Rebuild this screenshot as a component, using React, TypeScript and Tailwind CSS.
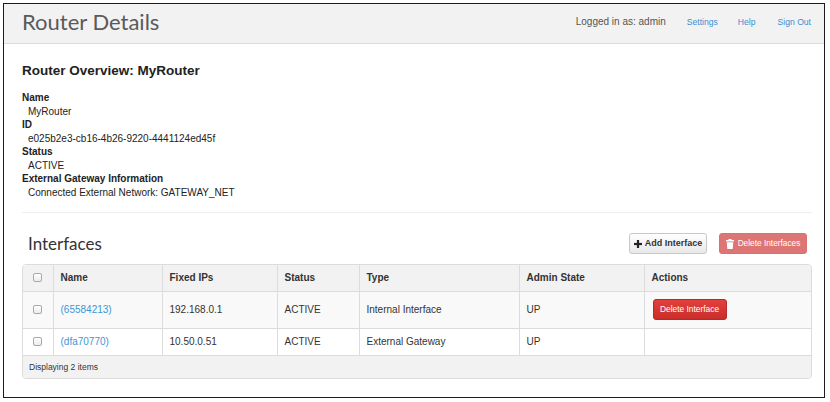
import React from "react";

const rows = [
  {
    id: "(65584213)",
    ip: "192.168.0.1",
    status: "ACTIVE",
    type: "Internal Interface",
    admin: "UP",
    deletable: true,
  },
  {
    id: "(dfa70770)",
    ip: "10.50.0.51",
    status: "ACTIVE",
    type: "External Gateway",
    admin: "UP",
    deletable: false,
  },
];

const details = [
  { label: "Name", value: "MyRouter" },
  { label: "ID", value: "e025b2e3-cb16-4b26-9220-4441124ed45f" },
  { label: "Status", value: "ACTIVE" },
  { label: "External Gateway Information", value: "Connected External Network: GATEWAY_NET" },
];

function Checkbox() {
  return (
    <span className="block mx-auto w-[9px] h-[9px] rounded-[2px] border border-[#a9a9a9] bg-gradient-to-b from-white to-[#ececec]" />
  );
}

function TrashIcon() {
  return (
    <svg width="8" height="10" viewBox="0 0 8 10" aria-hidden="true" className="flex-shrink-0">
      <rect x="0" y="1" width="8" height="1.5" fill="white" />
      <rect x="2.5" y="0" width="3" height="1.2" fill="white" />
      <path d="M0.8 3.2H7.2L6.7 10H1.3Z" fill="white" />
    </svg>
  );
}

function PlusIcon() {
  return (
    <svg width="8" height="8" viewBox="0 0 8 8" aria-hidden="true" className="flex-shrink-0">
      <rect x="2.9" y="0" width="2.2" height="8" fill="#222" />
      <rect x="0" y="2.9" width="8" height="2.2" fill="#222" />
    </svg>
  );
}

export default function App() {
  return (
    <div className="min-h-screen bg-white p-[3px] font-['Liberation_Sans',Arial,sans-serif] text-[#333]">
      <div className="w-[822px] h-[395px] border border-[#1c1c1c] overflow-hidden flex flex-col">
        {/* Top bar */}
        <header className="h-[40px] flex-shrink-0 bg-[#f2f2f2] border-b border-[#dcdcdc] flex justify-between pl-[18px] pr-[13px]">
          <h1 className="font-['Lato',sans-serif] text-[22px] leading-none text-[#5a5a5a] pt-[7px]">
            Router Details
          </h1>
          <div className="flex items-baseline pt-[10px]">
            <span className="text-[10px] text-[#555]">Logged in as: admin</span>
            <a className="ml-[21px] text-[8.6px] text-[#3b8fd0]">Settings</a>
            <a className="ml-[20px] text-[8.6px] text-[#3b8fd0]">Help</a>
            <a className="ml-[22px] text-[8.6px] text-[#3b8fd0]">Sign Out</a>
          </div>
        </header>

        <div className="pl-[18px] pr-[12px]">
          {/* Overview */}
          <h2 className="mt-[19px] text-[13.5px] leading-[16px] font-bold text-[#222]">
            Router Overview: MyRouter
          </h2>
          <dl className="mt-[12px] text-[10px] leading-[13.5px] text-[#222]">
            {details.map((d) => (
              <div key={d.label}>
                <dt className="font-bold">{d.label}</dt>
                <dd className="ml-[6px]">{d.value}</dd>
              </div>
            ))}
          </dl>
          <hr className="mt-[13px] border-t border-[#eeeeee]" />

          {/* Interfaces header */}
          <div className="mt-[20px] flex items-center justify-between h-[21px] pr-[5px]">
            <h3 className="pl-[6px] font-['Lato',sans-serif] text-[17px] leading-none text-[#333]">
              Interfaces
            </h3>
            <div className="flex gap-[12px]">
              <button className="h-[21px] w-[78px] flex items-center justify-center gap-[2px] rounded-[3px] border border-[#c8c8c8] bg-gradient-to-b from-white to-[#e8e8e8] text-[9px] font-bold text-[#333] shadow-[inset_0_1px_0_rgba(255,255,255,0.6)]">
                <PlusIcon />
                <span className="ml-[1px]">Add Interface</span>
              </button>
              <button className="h-[21px] w-[88px] flex items-center justify-center gap-[4px] rounded-[3px] border border-[#d87170] bg-[#dc7573] text-[8.3px] text-white">
                <TrashIcon />
                Delete Interfaces
              </button>
            </div>
          </div>

          {/* Table */}
          <div className="mt-[10px] border border-[#dcdcdc] rounded-[4px] overflow-hidden">
            <table className="w-full table-fixed border-collapse text-[10px] text-[#333]">
              <colgroup>
                <col className="w-[30px]" />
                <col className="w-[109px]" />
                <col className="w-[115px]" />
                <col className="w-[82px]" />
                <col className="w-[160px]" />
                <col className="w-[125px]" />
                <col />
              </colgroup>
              <thead>
                <tr className="h-[26px] bg-[#f2f2f2] border-b border-[#dcdcdc]">
                  <th className="p-0">
                    <Checkbox />
                  </th>
                  {["Name", "Fixed IPs", "Status", "Type", "Admin State", "Actions"].map((h) => (
                    <th key={h} className="px-[7px] text-left font-bold border-l border-[#dcdcdc]">
                      {h}
                    </th>
                  ))}
                </tr>
              </thead>
              <tbody>
                {rows.map((r, i) => (
                  <tr
                    key={r.id}
                    className={
                      i === 0
                        ? "h-[37px] bg-[#f9f9f9] border-b border-[#dcdcdc]"
                        : "h-[27px] bg-white"
                    }
                  >
                    <td className="p-0">
                      <Checkbox />
                    </td>
                    <td className="px-[7px] border-l border-[#dcdcdc] text-[#3d97d3]">{r.id}</td>
                    <td className="px-[7px] border-l border-[#dcdcdc]">{r.ip}</td>
                    <td className="px-[7px] border-l border-[#dcdcdc]">{r.status}</td>
                    <td className="px-[7px] border-l border-[#dcdcdc]">{r.type}</td>
                    <td className="px-[7px] border-l border-[#dcdcdc]">{r.admin}</td>
                    <td className="px-[8px] border-l border-[#dcdcdc]">
                      {r.deletable && (
                        <button className="h-[21px] w-[74px] rounded-[3px] border border-[#b42b28] bg-gradient-to-b from-[#e2403d] to-[#c92d2a] text-[8.4px] text-white">
                          Delete Interface
                        </button>
                      )}
                    </td>
                  </tr>
                ))}
              </tbody>
            </table>
            <div className="h-[23px] bg-[#f2f2f2] border-t border-[#dcdcdc] flex items-center pl-[6px] text-[8.5px] text-[#333]">
              Displaying 2 items
            </div>
          </div>
        </div>
      </div>
    </div>
  );
}
